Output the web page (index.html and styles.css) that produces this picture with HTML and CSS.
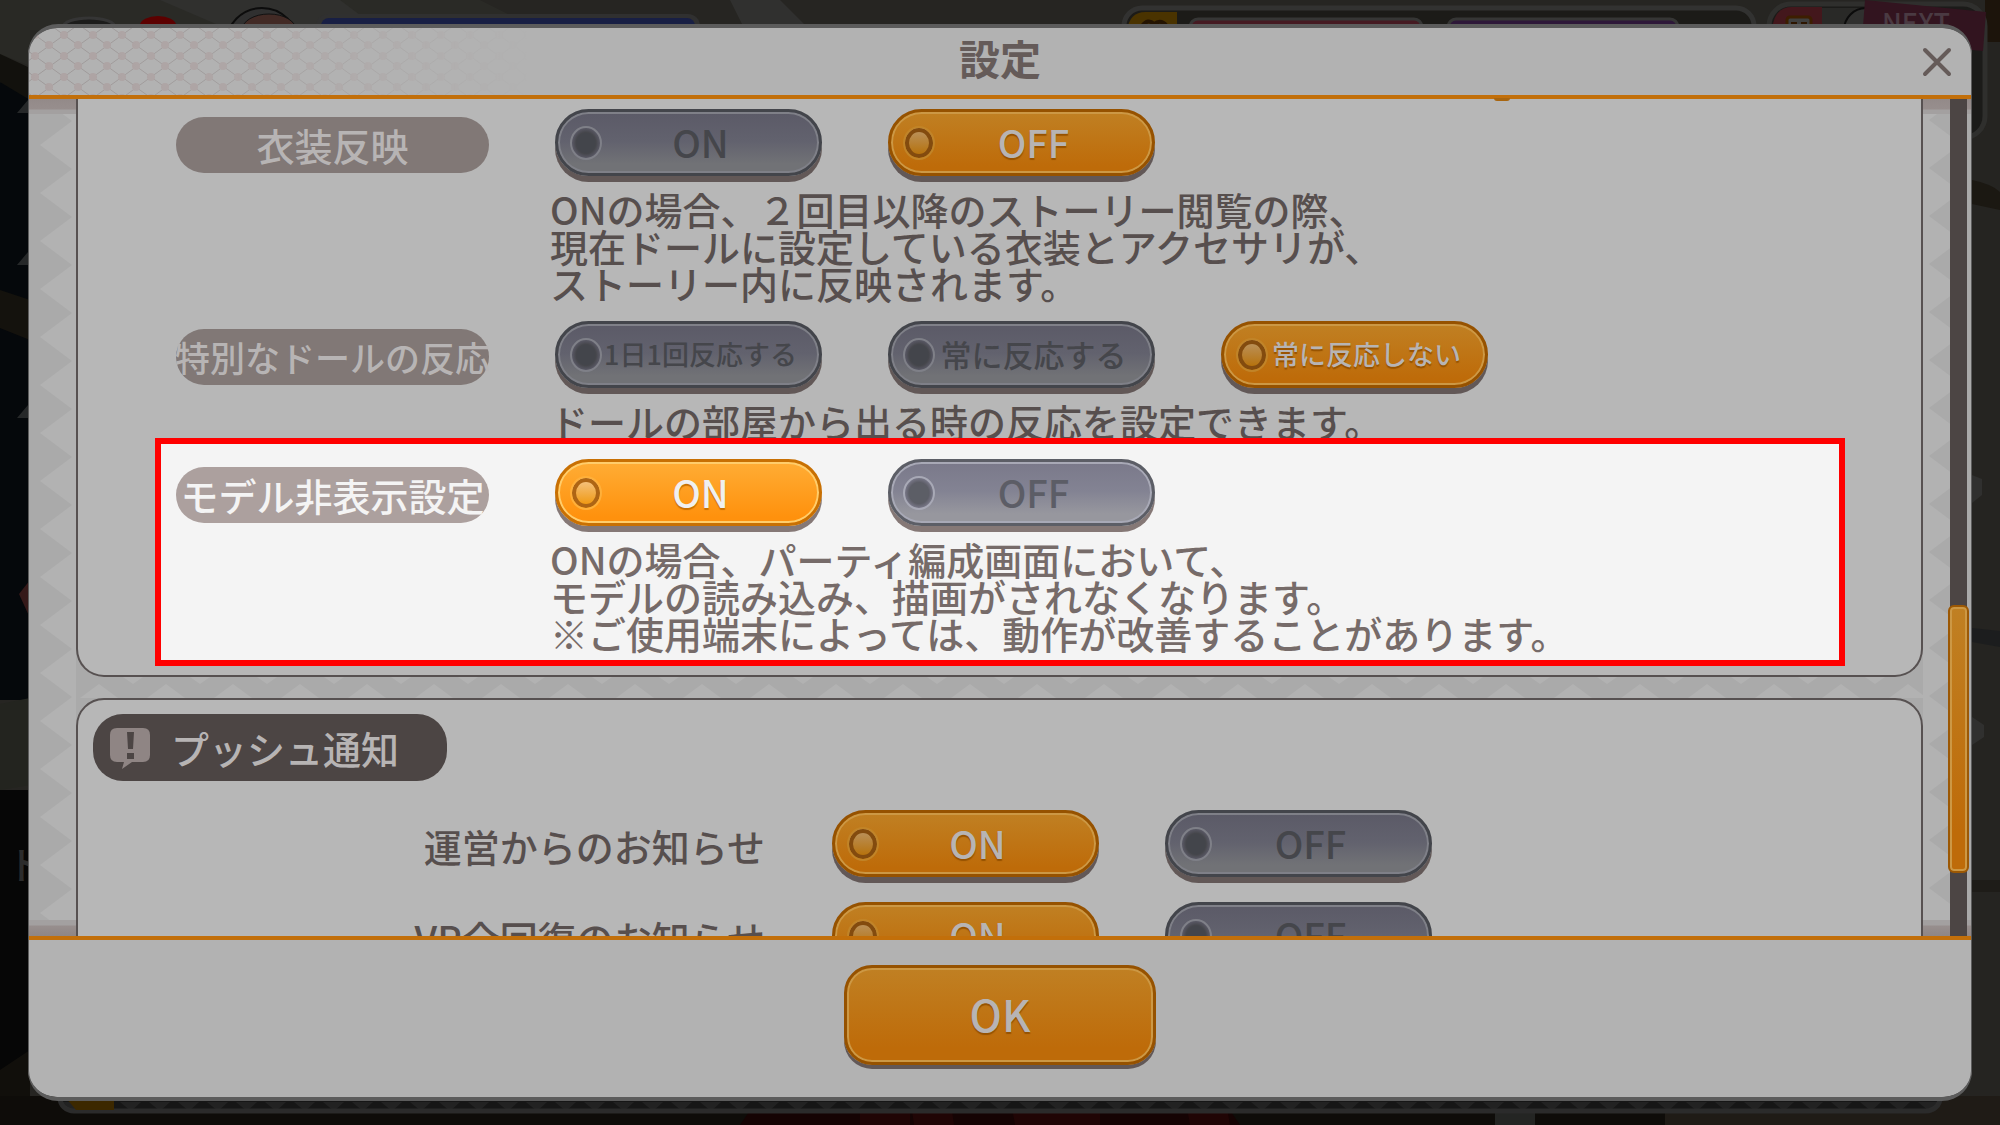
FILE: index.html
```html
<!DOCTYPE html>
<html lang="ja">
<head>
<meta charset="utf-8">
<meta name="viewport" content="width=device-width, initial-scale=1">
<title>設定</title>
<link rel="stylesheet" href="styles.css">
</head>
<body>
<svg class="scene" viewBox="0 0 2000 1125" preserveAspectRatio="xMidYMid slice" aria-hidden="true">
  <defs>
    <pattern id="hudTeeth" width="29" height="10" patternUnits="userSpaceOnUse" y="1102">
      <rect width="29" height="10" fill="#161616"/>
      <path d="M4 0h21l-10 9z" fill="#222"/>
    </pattern>
  </defs>
  <rect width="2000" height="1125" fill="#262522"/>
  <path d="M0 0H480L540 30H0z" fill="#2a2a26"/>
  <path d="M160 0h180l40 30H230z" fill="#30302e"/>
  <path d="M730 0h50l30 30h-65z" fill="#30302f"/>
  <path d="M0 0h30v66L0 54z" fill="#292925"/>
  <path d="M0 54L30 68V115L0 82z" fill="#12110d"/>
  <path d="M0 82L30 100V700H0z" fill="#05080b"/>
  <path d="M0 290L30 300V340L0 328z" fill="#14120d"/>
  <path d="M28 100L17 113h11zM28 252L17 265h11zM28 405L17 418h11z" fill="#262829"/>
  <path d="M30 580l-11 14 11 24z" fill="#351919"/>
  <path d="M0 704L30 698V785L0 790z" fill="#23241f"/>
  <rect y="790" width="30" height="290" fill="#060606"/>
  <path d="M0 1070L30 1050V1125H0z" fill="#110f0b"/>
  <text x="7" y="879" class="scene-kana">ト</text>
  <ellipse cx="89" cy="27" rx="26" ry="9" fill="#1c1c1b" stroke="#353535" stroke-width="3"/>
  <ellipse cx="158" cy="25" rx="18" ry="9" fill="#5c0000"/>
  <circle cx="262" cy="44" r="36" fill="#303030" stroke="#0c0c0c" stroke-width="2"/>
  <ellipse cx="269" cy="30" rx="27" ry="16" fill="#422a25" stroke="#111" stroke-width="1"/>
  <rect x="316" y="14" width="384" height="30" rx="12" fill="#303030"/>
  <rect x="321" y="18" width="374" height="30" rx="8" fill="#181f44"/>
  <rect x="1124" y="8" width="630" height="50" rx="18" fill="#1c1b18" stroke="#323231" stroke-width="5"/>
  <path d="M1127 30q3-18 18-18h32v18z" fill="#4a3300"/>
  <path d="M1142 26q6-8 12-2 8-6 14 4" fill="none" stroke="#241300" stroke-width="4"/>
  <rect x="1190" y="19" width="232" height="20" rx="8" fill="#451a22" stroke="#363635" stroke-width="3"/>
  <rect x="1448" y="19" width="230" height="20" rx="8" fill="#2d1738" stroke="#363635" stroke-width="3"/>
  <path d="M1970 40h30V1125h-30z" fill="#252421"/>
  <path d="M1985 0h15v42h-15z" fill="#1c140b"/>
  <path d="M1972 180q20 4 28 12v18l-28-6z" fill="#1b1812"/>
  <rect x="1769" y="4" width="216" height="134" rx="22" fill="#1b1b19" stroke="#2f2f2d" stroke-width="5"/>
  <path d="M1772 30q2-23 20-23h30v23z" fill="#43171c"/>
  <rect x="1787" y="17" width="24" height="16" rx="3" fill="#3f3f3e" stroke="#3d1e00" stroke-width="3"/>
  <path d="M1791 22h6v4h-6zM1801 22h6v4h-6z" fill="#2d1500"/>
  <rect x="1822" y="8" width="60" height="20" fill="#292927"/>
  <circle cx="1866" cy="30" r="22" fill="#30302f" stroke="#0b0b0b" stroke-width="2"/>
  <path d="M1865 0L1986 12L1983 51L1862 40z" fill="#32141f"/>
  <text x="1882" y="33" class="scene-next">NEXT</text>
  <path d="M1972 475l10 4v16l-10 8zM1972 717l12 8v12l-12 8z" fill="#30302f"/>
  <path d="M1972 628l28 3v16l-28-5z" fill="#1c1d1e"/>
  <rect x="1972" y="880" width="28" height="12" fill="#1e1c18"/>
  <rect y="1096" width="2000" height="29" fill="#0e0c09"/>
  <path d="M760 1096h460l20 29H740z" fill="#150303"/>
  <path d="M860 1096h50v29h-50zM910 1096h40l4 29h-40zM1010 1096h55v29h-50zM1060 1096h40v29h-38zM1185 1096h40l5 29h-40z" fill="#200505"/>
  <path d="M1495 1096h40v29h-40z" fill="#242523"/>
  <path d="M1665 1096h335v29h-335z" fill="#1f1b16"/>
  <rect x="60" y="1085" width="1880" height="26" rx="14" fill="url(#hudTeeth)" stroke="#2b2b2b" stroke-width="5"/>
  <path d="M66 1098h48v12H76z" fill="#3c2800"/>
</svg>

<main class="dialog" role="dialog" aria-labelledby="dialog-title">
  <header class="dialog-header">
    <svg class="lattice" aria-hidden="true">
      <defs>
        <pattern id="lattice" width="29" height="21" patternUnits="userSpaceOnUse" x="7" y="7">
          <path d="M0 0L29 21M29 0L0 21" stroke="#9e9999" stroke-width="1"/>
          <g fill="#ada3a3"><circle r="4"/><circle cx="29" r="4"/><circle cy="21" r="4"/><circle cx="29" cy="21" r="4"/><circle cx="14" cy="10" r="4"/></g>
        </pattern>
        <linearGradient id="latticeFade"><stop offset="0" stop-color="#fff"/><stop offset=".35" stop-color="#fff" stop-opacity=".85"/><stop offset="1" stop-color="#fff" stop-opacity="0"/></linearGradient>
        <mask id="latticeMask"><rect width="500" height="67" fill="url(#latticeFade)"/></mask>
      </defs>
      <rect width="500" height="67" fill="url(#lattice)" mask="url(#latticeMask)"/>
    </svg>
    <h1 id="dialog-title">設定</h1>
    <button class="close" type="button" aria-label="閉じる">
      <svg viewBox="0 0 30 30" aria-hidden="true"><path d="M3 3L27 27M27 3L3 27"/></svg>
    </button>
    <span class="knob-edge"></span>
  </header>

  <div class="dialog-body">
    <div class="content">
      <section class="group group-open">
        <fieldset class="setting" aria-labelledby="l-costume">
          <span class="pill" id="l-costume">衣装反映</span>
          <div class="setting-main">
            <div class="options">
              <label class="option"><input type="radio" name="costume"><span>ON</span></label>
              <label class="option"><input type="radio" name="costume" checked><span>OFF</span></label>
            </div>
            <p>ONの場合、２回目以降のストーリー閲覧の際、<br>現在ドールに設定している衣装とアクセサリが、<br>ストーリー内に反映されます。</p>
          </div>
        </fieldset>
        <fieldset class="setting" aria-labelledby="l-react">
          <span class="pill pill-tight" id="l-react">特別なドールの反応</span>
          <div class="setting-main">
            <div class="options">
              <label class="option option-small"><input type="radio" name="react"><span>1日1回反応する</span></label>
              <label class="option option-medium"><input type="radio" name="react"><span>常に反応する</span></label>
              <label class="option option-small"><input type="radio" name="react" checked><span>常に反応しない</span></label>
            </div>
            <p>ドールの部屋から出る時の反応を設定できます。</p>
          </div>
        </fieldset>
        <fieldset class="setting spotlight" aria-labelledby="l-model">
          <span class="pill" id="l-model">モデル非表示設定</span>
          <div class="setting-main">
            <div class="options">
              <label class="option"><input type="radio" name="model" checked><span>ON</span></label>
              <label class="option"><input type="radio" name="model"><span>OFF</span></label>
            </div>
            <p>ONの場合、パーティ編成画面において、<br>モデルの読み込み、描画がされなくなります。<br>※ご使用端末によっては、動作が改善することがあります。</p>
          </div>
        </fieldset>
      </section>

      <section class="group group-push">
        <h2 class="group-title">
          <svg viewBox="0 0 42 42" aria-hidden="true">
            <path class="bubble" d="M8 1H34Q41 1 41 8V28Q41 35 34 35H23L13 42L15 35H8Q1 35 1 28V8Q1 1 8 1z"/>
            <path class="mark" d="M18 5H25L24 22H19zM18 26H25V32H18z"/>
          </svg>
          プッシュ通知
        </h2>
        <fieldset class="notice" aria-labelledby="l-news">
          <span class="notice-label" id="l-news">運営からのお知らせ</span>
          <div class="options">
            <label class="option"><input type="radio" name="news" checked><span>ON</span></label>
            <label class="option"><input type="radio" name="news"><span>OFF</span></label>
          </div>
        </fieldset>
        <fieldset class="notice" aria-labelledby="l-vp">
          <span class="notice-label" id="l-vp">VP全回復のお知らせ</span>
          <div class="options">
            <label class="option"><input type="radio" name="vp" checked><span>ON</span></label>
            <label class="option"><input type="radio" name="vp"><span>OFF</span></label>
          </div>
        </fieldset>
      </section>
    </div>
    <div class="track"><div class="thumb"></div></div>
  </div>

  <footer class="dialog-footer">
    <button class="ok" type="button">OK</button>
  </footer>
</main>
</body>
</html>
```
FILE: styles.css
```css
* { box-sizing: border-box; }

:root {
  --surface: #b2b2b2;
  --panel: #b7b7b7;
  --ink: #574f4e;
  --accent: #c26f0a;
  --pill: #817876;
  --pill-text: #b7b4b4;
  --on-top: #c08023;
  --on-bottom: #be6b09;
  --on-edge: #965200;
  --on-line: #cc9845;
  --on-text: #b7b4b4;
  --off-top: #5b5a67;
  --off-mid: #62626e;
  --off-bottom: #717276;
  --off-edge: #43454b;
  --off-line: #7f8088;
  --off-text: #45464b;
  --drop: #625857;
  --dot-top: #bb9565;
  --dot-bottom: #b56d00;
  --dot-edge: #834b0e;
  --dot-line: #c18428;
}

body {
  margin: 0;
  height: 100vh;
  overflow: hidden;
  padding: 28px;
  background: #262522;
  color: var(--ink);
  font: 500 38px/37px "Noto Sans CJK JP", "Noto Sans", sans-serif;
}

h1, h2, p { margin: 0; font: inherit; }
fieldset { margin: 0; padding: 0; border: 0; min-width: 0; }

.scene { position: absolute; inset: 0; width: 100%; height: 100%; }
.scene-kana { font-size: 38px; fill: #2c2c2c; }
.scene-next { font-size: 27px; fill: #4a3a42; }

.dialog {
  position: relative;
  display: flex;
  flex-direction: column;
  height: 100%;
  overflow: hidden;
  border-radius: 28px;
  background: var(--surface);
}

body::after {
  content: "";
  position: absolute;
  inset: 24px 28px;
  border: solid #5c5c5c;
  border-width: 4px 1px;
  border-radius: 30px;
  pointer-events: none;
}

.dialog-header {
  position: relative;
  display: flex;
  justify-content: center;
  align-items: center;
  flex: none;
  height: 71px;
  border-bottom: 4px solid var(--accent);
}
.dialog-header h1 {
  position: relative;
  padding-bottom: 8px;
  font-size: 41px;
  font-weight: 700;
  color: #655b59;
}
.lattice { position: absolute; left: 0; top: 0; width: 500px; height: 67px; }
.close {
  position: absolute;
  right: 20px;
  top: 19px;
  width: 30px;
  height: 30px;
  padding: 0;
  border: 0;
  background: none;
}
.close svg { display: block; }
.close path { fill: none; stroke: #655b59; stroke-width: 4; stroke-linecap: round; }
.knob-edge {
  position: absolute;
  z-index: 1;
  right: 462px;
  bottom: -6px;
  width: 16px;
  height: 3px;
  border-radius: 0 0 8px 8px;
  background: #a8650f;
}

.dialog-body {
  position: relative;
  display: flex;
  flex: 1;
  min-height: 0;
  overflow: hidden;
  background:
    linear-gradient(#938a89, #978e8d 10px, #a3a0a0 11px, #a3a0a0 15px) 0 0 / 100% 15px no-repeat,
    linear-gradient(#a3a0a0, #a3a0a0 5px, #978e8d 6px, #8f8685) 0 100% / 100% 16px no-repeat,
    url("data:image/svg+xml,%3Csvg xmlns='http://www.w3.org/2000/svg' width='48' height='48'%3E%3Cpath fill='%23aaa' d='M0 0h48v48H0z'/%3E%3Cpath fill='%23b2b2b2' d='M12 24L44 0h4v48h-4z'/%3E%3C/svg%3E") 0 22px / 48px 48px repeat-y,
    url("data:image/svg+xml,%3Csvg xmlns='http://www.w3.org/2000/svg' width='49' height='48'%3E%3Cpath fill='%23b2b2b2' d='M0 0h49v48H0z'/%3E%3Cpath fill='%23aaa' d='M6 24L38 0h11v48H38z'/%3E%3C/svg%3E") 100% 45px / 49px 48px repeat-y,
    url("data:image/svg+xml,%3Csvg xmlns='http://www.w3.org/2000/svg' width='67' height='42'%3E%3Cpath fill='%23aaa' d='M0 0h67v42H0z'/%3E%3Cpath fill='%23b2b2b2' d='M14 21L33 7l19 14zM0 0h10L0 7zM67 0H57l10 7z'/%3E%3C/svg%3E") 38px 578px / 67px 42px;
}
.content {
  flex: 1;
  min-width: 0;
  display: flex;
  flex-direction: column;
  gap: 21px;
  margin: 0 27px 0 48px;
}

.group {
  flex: none;
  border: 2px solid #575151;
  border-radius: 28px;
  background: var(--panel);
}
.group-open {
  display: flex;
  flex-direction: column;
  gap: 20px;
  padding: 10px 76px 9px 77px;
  border-top: 0;
  border-radius: 0 0 28px 28px;
}
.group-push {
  display: flex;
  flex-direction: column;
  gap: 19px;
  padding: 14px 15px;
}

.setting {
  display: flex;
  align-items: flex-start;
  gap: 61px;
  padding: 0 21px;
}
.setting-main { display: flex; flex-direction: column; gap: 8px; }
.setting-main p { white-space: nowrap; }
.setting .options { padding-left: 5px; }

.spotlight {
  --panel: #f4f4f4;
  --ink: #766b69;
  --pill: #aca09e;
  --pill-text: #f4f4f4;
  --on-top: #ffad35;
  --on-bottom: #ff910d;
  --on-edge: #c87003;
  --on-line: #ffcd6b;
  --on-text: #f0f0f0;
  --off-top: #7a798a;
  --off-mid: #838393;
  --off-bottom: #97979e;
  --off-edge: #5c5e66;
  --off-line: #a8a9b6;
  --off-text: #5c5d66;
  --drop: #857876;
  --dot-top: #f5c78c;
  --dot-bottom: #ef9302;
  --dot-edge: #ae6514;
  --dot-line: #ffb03a;
  position: relative;
  margin-top: -21px;
  padding: 15px 15px 9px;
  border: 6px solid #f00;
  background: var(--panel);
  color: var(--ink);
}

.pill {
  display: flex;
  flex: none;
  justify-content: center;
  align-items: center;
  width: 313px;
  height: 56px;
  margin-top: 8px;
  padding-bottom: 2px;
  border-radius: 28px;
  background: var(--pill);
  color: var(--pill-text);
  white-space: nowrap;
}
.pill-tight { font-size: 35px; }

.options { display: flex; gap: 66px; }
.option {
  display: flex;
  align-items: center;
  flex: none;
  width: 267px;
  height: 67px;
  margin-bottom: 6px;
  padding: 0 20px 0 12px;
  border: 3px solid var(--off-edge);
  border-radius: 34px;
  background: linear-gradient(var(--off-top), var(--off-mid) 48%, var(--off-bottom) 85%);
  box-shadow: inset 0 0 0 2px var(--off-line), 0 6px 0 var(--drop);
  color: var(--off-text);
}
.option:has(:checked) {
  border-color: var(--on-edge);
  background: linear-gradient(var(--on-top), var(--on-bottom) 90%);
  box-shadow: inset 0 0 0 2px var(--on-line), 0 6px 0 var(--drop);
  color: var(--on-text);
  text-shadow: 0 2px 1px var(--on-edge);
}
.option span {
  flex: 1;
  padding-bottom: 3px;
  text-align: center;
  white-space: nowrap;
}
.option-small span { font-size: 27px; }
.option-medium span { font-size: 31px; }
.option input {
  appearance: none;
  flex: none;
  width: 32px;
  height: 34px;
  margin: 0;
  border: 2px solid var(--off-line);
  border-radius: 50%;
  background: radial-gradient(var(--off-edge) 45%, var(--off-text) 50%, var(--off-top) 72%);
}
.option input:checked {
  border: 2px solid var(--dot-line);
  background: linear-gradient(var(--dot-top), var(--dot-bottom));
  box-shadow: inset 0 0 0 4px var(--dot-edge);
}

.group-title {
  display: flex;
  align-items: center;
  gap: 20px;
  width: 354px;
  height: 67px;
  margin-bottom: 10px;
  padding-left: 16px;
  border-radius: 30px;
  background: #4c4544;
  color: #b7b4b4;
}
.group-title svg { width: 42px; height: 42px; }
.bubble { fill: #8f8584; }
.mark { fill: #4c4544; }

.notice { display: flex; align-items: center; gap: 67px; }
.notice-label { flex: none; width: 672px; padding-bottom: 2px; text-align: right; }

.track {
  flex: none;
  align-self: stretch;
  width: 17px;
  margin-right: 5px;
  background: #4c4544;
}
.thumb {
  height: 32%;
  margin: 506px -2px 0;
  border: 2px solid #9c5804;
  border-radius: 6px;
  background: linear-gradient(var(--on-top), var(--on-bottom) 85%);
  box-shadow: inset 0 0 0 2px var(--on-line);
}

.dialog-footer {
  display: flex;
  justify-content: center;
  align-items: flex-start;
  flex: none;
  height: 161px;
  padding-top: 25px;
  border-top: 4px solid var(--accent);
}
.ok {
  width: 312px;
  height: 100px;
  padding: 0 0 3px;
  border: 3px solid var(--on-edge);
  border-radius: 28px;
  background: linear-gradient(var(--on-top), var(--on-bottom) 85%);
  box-shadow: inset 0 0 0 2px var(--on-line), 0 4px 0 var(--drop);
  color: var(--on-text);
  font: inherit;
  font-size: 43px;
  text-shadow: 0 2px 1px var(--on-edge);
}
```
